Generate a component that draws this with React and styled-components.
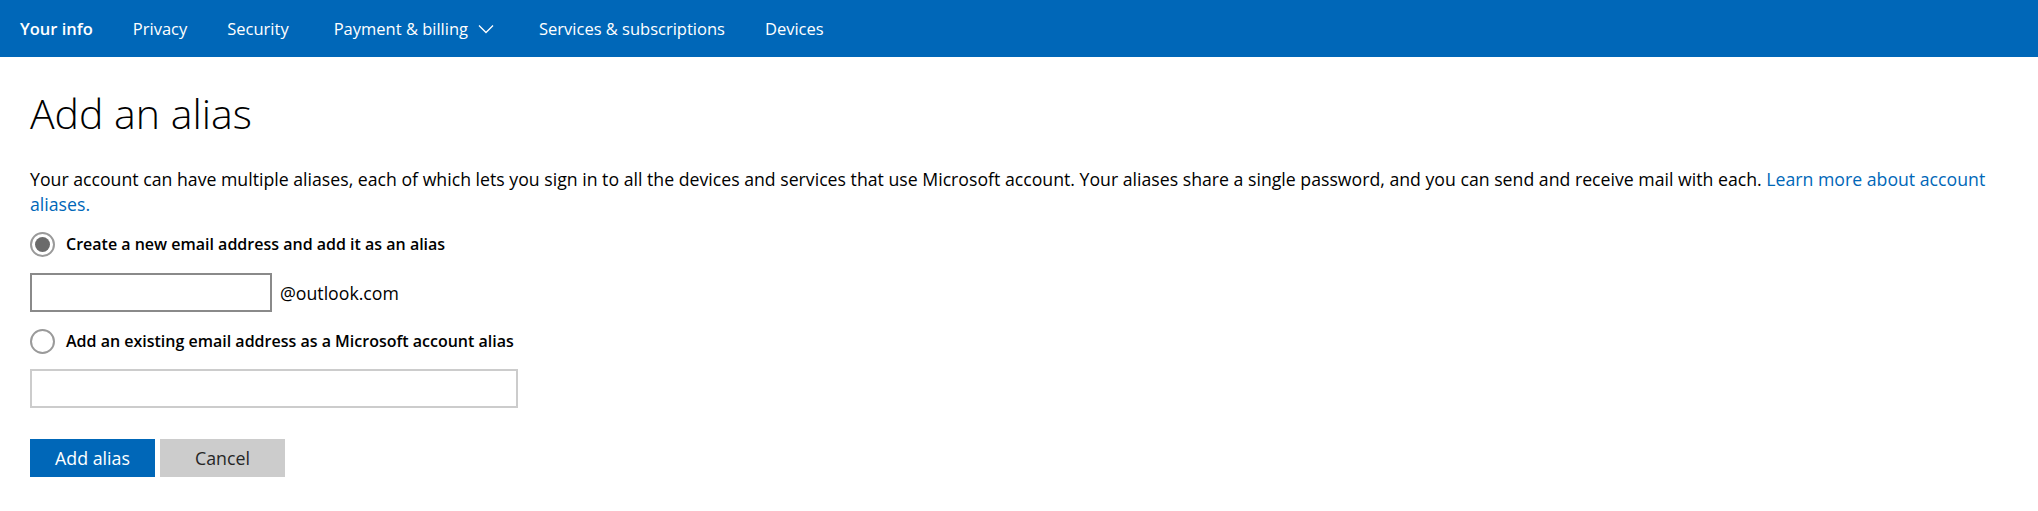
import React from "react";
import styled, { createGlobalStyle } from "styled-components";

const Global = createGlobalStyle`
  html, body { margin: 0; padding: 0; background: #fff; }
  body { font-family: "Open Sans", "Noto Sans", sans-serif; color: #000; }
  * { box-sizing: border-box; }
`;

const NavBar = styled.nav`
  height: 57px;
  background: #0067b8;
  display: flex;
  align-items: center;
  padding-left: 20px;
  gap: 40px;
`;

const NavItem = styled.a`
  color: #fff;
  font-size: 16.5px;
  font-weight: ${(p) => (p.$active ? 600 : 400)};
  text-decoration: none;
  display: flex;
  align-items: center;
  gap: 10px;
  white-space: nowrap;
  margin: ${(p) => (p.$menu ? "0 5px" : "0")};
`;

const Main = styled.main`
  padding: 0 30px;
`;

const Heading = styled.h1`
  font-family: "Open Sans", "Noto Sans", sans-serif;
  font-weight: 300;
  font-size: 41px;
  line-height: 48px;
  margin: 32px 0 30px;
  color: #000;
`;

const Paragraph = styled.p`
  font-size: 17.7px;
  line-height: 25px;
  margin: 0 0 12px;
`;

const Link = styled.a`
  color: #0067b8;
  text-decoration: none;
`;

const OptionRow = styled.label`
  display: flex;
  align-items: center;
  gap: 11px;
  font-size: 16px;
  font-weight: 600;
  height: 30px;
`;

const Radio = styled.span`
  width: 25px;
  height: 25px;
  border-radius: 50%;
  border: 2px solid #9a9a9a;
  display: flex;
  align-items: center;
  justify-content: center;
  flex-shrink: 0;
  &::after {
    content: "";
    width: 15px;
    height: 15px;
    border-radius: 50%;
    background: ${(p) => (p.$checked ? "#6b6b6b" : "transparent")};
  }
`;

const FieldRow = styled.div`
  display: flex;
  align-items: center;
  gap: 8px;
  margin: ${(p) => p.$margin};
`;

const TextInput = styled.input`
  width: ${(p) => p.$width}px;
  height: 39px;
  border: 2px solid ${(p) => (p.$dark ? "#8a8a8a" : "#cccccc")};
  background: #fff;
  font-size: 17px;
  padding: 0 8px;
  outline: none;
`;

const Suffix = styled.span`
  font-size: 17.7px;
`;

const Buttons = styled.div`
  display: flex;
  gap: 5px;
  margin-top: 31px;
`;

const Button = styled.button`
  width: 125px;
  height: 38px;
  border: none;
  font-family: "Open Sans", "Noto Sans", sans-serif;
  font-size: 17.8px;
  background: ${(p) => (p.$primary ? "#0067b8" : "#cccccc")};
  color: ${(p) => (p.$primary ? "#fff" : "#262626")};
  cursor: pointer;
`;

const Chevron = () => (
  <svg width="16" height="10" viewBox="0 0 16 10" fill="none">
    <path d="M1 1.5l7 7 7-7" stroke="#fff" strokeWidth="1.3" />
  </svg>
);

export default function App() {
  return (
    <>
      <Global />
      <NavBar>
        <NavItem $active href="#">Your info</NavItem>
        <NavItem href="#">Privacy</NavItem>
        <NavItem href="#">Security</NavItem>
        <NavItem $menu href="#">Payment &amp; billing <Chevron /></NavItem>
        <NavItem href="#">Services &amp; subscriptions</NavItem>
        <NavItem href="#">Devices</NavItem>
      </NavBar>
      <Main>
        <Heading>Add an alias</Heading>
        <Paragraph>
          Your account can have multiple aliases, each of which lets you sign in to all the devices and services that use
          Microsoft account. Your aliases share a single password, and you can send and receive mail with each.{" "}
          <Link href="#">Learn more about account aliases.</Link>
        </Paragraph>
        <OptionRow>
          <Radio $checked />
          Create a new email address and add it as an alias
        </OptionRow>
        <FieldRow $margin="14px 0 14px">
          <TextInput $width={242} $dark />
          <Suffix>@outlook.com</Suffix>
        </FieldRow>
        <OptionRow>
          <Radio />
          Add an existing email address as a Microsoft account alias
        </OptionRow>
        <FieldRow $margin="13px 0 0">
          <TextInput $width={488} />
        </FieldRow>
        <Buttons>
          <Button $primary>Add alias</Button>
          <Button>Cancel</Button>
        </Buttons>
      </Main>
    </>
  );
}
